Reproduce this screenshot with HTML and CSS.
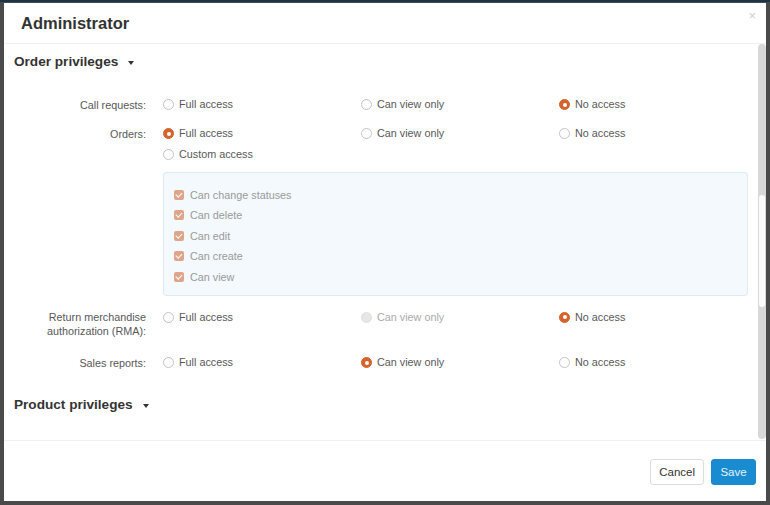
FILE: index.html
```html
<!DOCTYPE html>
<html>
<head>
<meta charset="utf-8">
<link rel="stylesheet" href="styles.css">
</head>
<body>
<div class="page">
  <div class="modal">
    <div class="modal-header">
      <h3 class="modal-title">Administrator</h3>
      <span class="close">×</span>
    </div>
    <div class="modal-body">
      <div class="scrollbar"><div class="thumb"></div></div>
      <div class="section">
        <div class="section-title">Order privileges <span class="caret"></span></div>

        <div class="row">
          <div class="label">Call requests:</div>
          <div class="controls">
            <div class="opts">
              <div class="opt"><span class="radio"></span>Full access</div>
              <div class="opt"><span class="radio"></span>Can view only</div>
              <div class="opt"><span class="radio checked"></span>No access</div>
            </div>
          </div>
        </div>

        <div class="row">
          <div class="label">Orders:</div>
          <div class="controls">
            <div class="opts">
              <div class="opt"><span class="radio checked"></span>Full access</div>
              <div class="opt"><span class="radio"></span>Can view only</div>
              <div class="opt"><span class="radio"></span>No access</div>
            </div>
            <div class="opt"><span class="radio"></span>Custom access</div>
            <div class="box">
              <div class="check"><span class="checkbox"></span>Can change statuses</div>
              <div class="check"><span class="checkbox"></span>Can delete</div>
              <div class="check"><span class="checkbox"></span>Can edit</div>
              <div class="check"><span class="checkbox"></span>Can create</div>
              <div class="check"><span class="checkbox"></span>Can view</div>
            </div>
          </div>
        </div>

        <div class="row row-tall">
          <div class="label">Return merchandise authorization (RMA):</div>
          <div class="controls">
            <div class="opts">
              <div class="opt"><span class="radio"></span>Full access</div>
              <div class="opt disabled"><span class="radio"></span>Can view only</div>
              <div class="opt"><span class="radio checked"></span>No access</div>
            </div>
          </div>
        </div>

        <div class="row">
          <div class="label">Sales reports:</div>
          <div class="controls">
            <div class="opts">
              <div class="opt"><span class="radio"></span>Full access</div>
              <div class="opt"><span class="radio checked"></span>Can view only</div>
              <div class="opt"><span class="radio"></span>No access</div>
            </div>
          </div>
        </div>
      </div>

      <div class="section">
        <div class="section-title second">Product privileges <span class="caret"></span></div>
      </div>
    </div>
    <div class="modal-footer">
      <button class="btn">Cancel</button>
      <button class="btn btn-primary">Save</button>
    </div>
  </div>
</div>
</body>
</html>
```

FILE: styles.css
```css
html, body {
  margin: 0;
  padding: 0;
}
body {
  width: 770px;
  height: 505px;
  background: #4a4a4a;
  font-family: "Liberation Sans", Arial, sans-serif;
  overflow: hidden;
}
.page {
  border-top: 2px solid #1d3447;
  padding: 1px 4px 0 4px;
}
.modal {
  width: 762px;
  height: 498px;
  background: #fff;
  display: flex;
  flex-direction: column;
}
.modal-header {
  height: 40px;
  border-bottom: 1px solid #f0f0f0;
  display: flex;
  justify-content: space-between;
  padding: 0 10px 0 17px;
  flex: none;
}
.modal-title {
  margin: 0;
  font-size: 16.5px;
  line-height: 40px;
  font-weight: bold;
  color: #333;
}
.close {
  color: #d0d0d0;
  font-size: 13px;
  line-height: 13px;
  margin-top: 6px;
}
.modal-body {
  flex: 1;
  position: relative;
  overflow: hidden;
}
.scrollbar {
  position: absolute;
  right: 0;
  top: 0;
  bottom: 1px;
  width: 8px;
  background: #d8d8d8;
  border-radius: 4px;
}
.thumb {
  position: absolute;
  left: 1px;
  right: 1px;
  top: 151px;
  height: 112px;
  background: #fbfbfb;
  border-radius: 3px;
}
.section {
  padding: 0 18px 0 10px;
}
.section-title {
  font-size: 13.6px;
  font-weight: bold;
  color: #333;
  line-height: 20px;
  margin-top: 8px;
  margin-bottom: 22px;
  display: flex;
  align-items: center;
}
.section-title.second {
  margin-top: 22px;
}
.caret {
  display: inline-block;
  width: 0;
  height: 0;
  border-left: 3.5px solid transparent;
  border-right: 3.5px solid transparent;
  border-top: 4px solid #333;
  margin-left: 10px;
  margin-top: 1px;
}
.row {
  display: flex;
  margin-bottom: 8px;
  font-size: 10.8px;
  color: #585858;
}
.row-tall {
  margin-bottom: 14px;
}
.label {
  width: 132px;
  flex: none;
  text-align: right;
  line-height: 14px;
  padding-top: 3.5px;
  margin-right: 17px;
}
.controls {
  width: 585px;
  min-width: 0;
  flex: none;
}
.opts {
  display: flex;
}
.opt {
  width: 198px;
  line-height: 21px;
  display: flex;
  align-items: center;
}
.opts .opt:last-child {
  width: auto;
  flex: 1;
}
.opt.disabled {
  color: #aaa;
}
.radio {
  width: 9px;
  height: 9px;
  border: 1px solid #c4c4c4;
  border-radius: 50%;
  background: #fff;
  margin-right: 5px;
  position: relative;
  flex: none;
}
.radio.checked {
  background: #d6622c;
  border-color: #d6622c;
}
.radio.checked::after {
  content: "";
  position: absolute;
  left: 2.5px;
  top: 2.5px;
  width: 4px;
  height: 4px;
  border-radius: 50%;
  background: #fff;
}
.opt.disabled .radio {
  background: #e6e6e6;
  border-color: #e0e0e0;
}
.box {
  margin-top: 6.5px;
  margin-bottom: 2.5px;
  background: #f3f9fd;
  border: 1px solid #dbecf7;
  border-radius: 3px;
  padding: 12px 10px 8px 10px;
}
.check {
  line-height: 20.5px;
  display: flex;
  align-items: center;
  color: #9a9a9a;
}
.checkbox {
  width: 10px;
  height: 10px;
  border-radius: 2px;
  background: #dfa58a;
  margin-right: 6px;
  position: relative;
  flex: none;
}
.checkbox::after {
  content: "";
  position: absolute;
  left: 3px;
  top: 1px;
  width: 2.5px;
  height: 5px;
  border-right: 1.5px solid #fff;
  border-bottom: 1.5px solid #fff;
  transform: rotate(45deg);
}
.modal-footer {
  border-top: 1px solid #f0f0f0;
  display: flex;
  justify-content: flex-end;
  align-items: flex-start;
  padding: 18px 10px 0 0;
  box-sizing: border-box;
  height: 61px;
  flex: none;
}
.btn {
  font-family: "Liberation Sans", Arial, sans-serif;
  font-size: 11.5px;
  height: 26px;
  padding: 0 8px;
  border: 1px solid #ddd;
  border-radius: 3px;
  background: #fff;
  color: #333;
  margin-left: 7px;
}
.btn-primary {
  background: #198bd1;
  border-color: #198bd1;
  color: #e6f3fb;
  width: 45px;
}
```
